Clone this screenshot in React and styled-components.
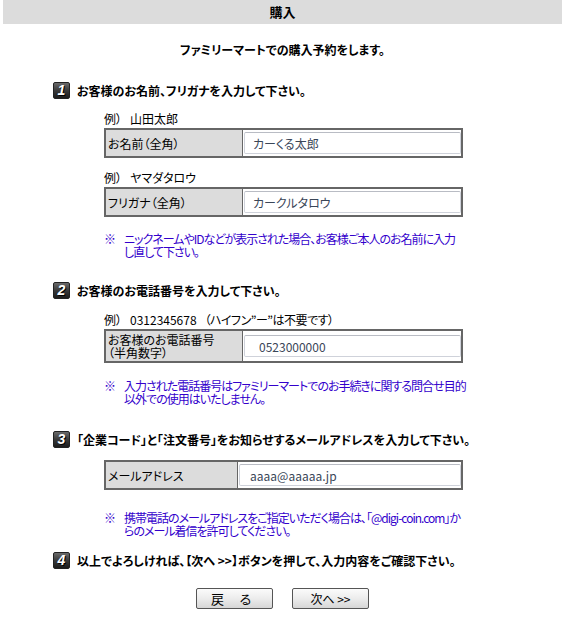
import React from 'react';
import styled, { createGlobalStyle } from 'styled-components';

const Global = createGlobalStyle`
  html, body { margin: 0; padding: 0; background: #fff; }
  body {
    font-family: "Noto Sans CJK JP", "Liberation Sans", sans-serif;
    font-size: 12px;
    color: #000;
    font-feature-settings: "palt";
  }
`;

const Page = styled.div`
  width: 562px;
  padding-bottom: 13px;
`;

const TitleBar = styled.h1`
  margin: 0 0 0 3px;
  height: 24px;
  line-height: 24px;
  background: #dcdcdc;
  text-align: center;
  font-size: 13px;
  font-weight: bold;
`;

const Lead = styled.p`
  margin: 19px 0 0;
  padding-left: 3px;
  text-align: center;
  font-weight: bold;
  line-height: 14px;
`;

const Step = styled.h2`
  display: flex;
  align-items: center;
  gap: 7px;
  height: 17px;
  margin: ${p => p.$top}px 0 0 53px;
  font-size: 12px;
  font-weight: bold;
  white-space: nowrap;
`;

const Badge = styled.span`
  flex: none;
  width: 17px;
  height: 17px;
  box-sizing: border-box;
  border: 1px solid #222;
  border-radius: 2px;
  background: linear-gradient(180deg, #6a6a6a 0%, #3a3a3a 50%, #1c1c1c 100%);
  color: #fff;
  font-family: "Liberation Sans", Arial, sans-serif;
  font-style: italic;
  font-weight: bold;
  font-size: 14px;
  line-height: 15px;
  text-align: center;
  text-shadow: 1px 1px 0 #000;
`;

const Block = styled.div`
  margin-left: 104px;
  width: 359px;
`;

const Example = styled.div`
  display: flex;
  margin: ${p => p.$top}px 0 2px;
  line-height: 14px;
  white-space: nowrap;
`;

const ExMark = styled.span`
  width: 26px;
  flex: none;
`;

const ExNote = styled.span`
  margin-left: 8px;
  letter-spacing: -0.5px;
`;

const FieldTable = styled.div`
  display: grid;
  grid-template-columns: ${p => p.$label}px 1fr;
  min-height: 30px;
  border: 2px solid #666;
  box-sizing: border-box;
  margin-top: ${p => p.$top || 0}px;
`;

const Label = styled.div`
  display: flex;
  align-items: center;
  background: #dcdcdc;
  border-right: 1px solid #666;
  padding: 2px 2px;
  line-height: 13px;
  white-space: nowrap;
`;

const InputCell = styled.div`
  display: flex;
  align-items: center;
  padding: 2px 0 2px 1px;
`;

const TextInput = styled.input`
  width: 100%;
  height: 22px;
  box-sizing: border-box;
  margin: 0;
  border: 1px solid #cfd2da;
  border-top-color: #b9bcc4;
  border-radius: 2px;
  background: #fff;
  padding: 0 0 0 ${p => p.$indent}px;
  font-family: "Noto Sans CJK JP", "Liberation Sans", sans-serif;
  font-feature-settings: "palt";
  font-size: 12px;
  color: #3a4658;
  outline: none;
`;

const Note = styled.div`
  display: flex;
  margin: ${p => p.$top}px 0 0 104px;
  color: #3300cc;
  line-height: 13px;
  white-space: nowrap;
`;

const NoteMark = styled.span`
  width: 20px;
  flex: none;
`;

const NoteText = styled.span`
  letter-spacing: -1px;
`;

const Buttons = styled.div`
  display: flex;
  justify-content: center;
  gap: 19px;
  margin-top: 19px;
  padding-left: 3px;
`;

const Button = styled.button`
  width: 77px;
  height: 21px;
  margin: 0;
  padding: 0;
  border: 1px solid #555;
  border-radius: 2px;
  background: linear-gradient(180deg, #fbfbfb 0%, #ececec 50%, #d6d6d6 100%);
  font-family: "Noto Sans CJK JP", "Liberation Sans", sans-serif;
  font-size: ${p => p.$size}px;
  line-height: 19px;
  color: #000;
  letter-spacing: ${p => p.$spacing || 0}px;
`;

function Field({ label, value, labelWidth, indent = 8, top }) {
  return (
    <FieldTable $label={labelWidth} $top={top}>
      <Label>{label}</Label>
      <InputCell>
        <TextInput type="text" defaultValue={value} $indent={indent} />
      </InputCell>
    </FieldTable>
  );
}

export default function App() {
  return (
    <Page>
      <Global />
      <TitleBar>購入</TitleBar>
      <Lead>ファミリーマートでの購入予約をします。</Lead>

      <Step $top={25}><Badge>1</Badge>お客様のお名前、フリガナを入力して下さい。</Step>
      <Block>
        <Example $top={13}><ExMark>例）</ExMark>山田太郎</Example>
        <Field label="お名前（全角）" value="カーくる太郎" labelWidth={137} />
        <Example $top={13}><ExMark>例）</ExMark>ヤマダタロウ</Example>
        <Field label="フリガナ（全角）" value="カークルタロウ" labelWidth={137} />
      </Block>
      <Note $top={15}>
        <NoteMark>※</NoteMark>
        <NoteText>ニックネームやIDなどが表示された場合、お客様ご本人のお名前に入力<br />し直して下さい。</NoteText>
      </Note>

      <Step $top={24}><Badge>2</Badge>お客様のお電話番号を入力して下さい。</Step>
      <Block>
        <Example $top={14}><ExMark>例）</ExMark>0312345678<ExNote>（ハイフン”ー”は不要です）</ExNote></Example>
        <Field label={<span>お客様のお電話番号<br />（半角数字）</span>} value="0523000000" labelWidth={137} indent={14} />
      </Block>
      <Note $top={16}>
        <NoteMark>※</NoteMark>
        <NoteText>入力された電話番号はファミリーマートでのお手続きに関する問合せ目的<br />以外での使用はいたしません。</NoteText>
      </Note>

      <Step $top={26}><Badge>3</Badge>「企業コード」と「注文番号」をお知らせするメールアドレスを入力して下さい。</Step>
      <Block>
        <Field label="メールアドレス" value="aaaa@aaaaa.jp" labelWidth={132} indent={10} top={12} />
      </Block>
      <Note $top={21}>
        <NoteMark>※</NoteMark>
        <NoteText>携帯電話のメールアドレスをご指定いただく場合は、「@digi-coin.com」か<br />らのメール着信を許可してください。</NoteText>
      </Note>

      <Step $top={15}><Badge>4</Badge>以上でよろしければ、【次へ &gt;&gt;】ボタンを押して、入力内容をご確認下さい。</Step>
      <Buttons>
        <Button type="button" $size={13} $spacing={6}>戻 る</Button>
        <Button type="button" $size={12}>次へ &gt;&gt;</Button>
      </Buttons>
    </Page>
  );
}
